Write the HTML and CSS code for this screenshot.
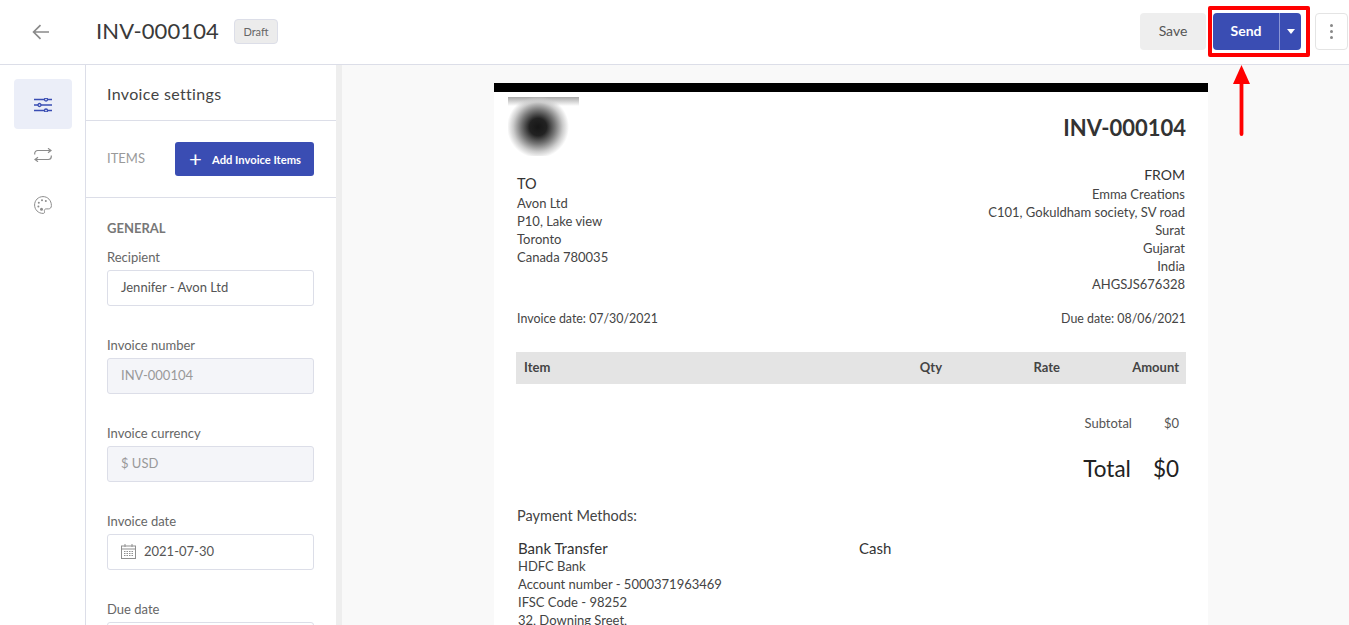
FILE: index.html
```html
<!DOCTYPE html>
<html lang="en">
<head>
  <meta charset="UTF-8">
  <title>INV-000104</title>
  <link rel="stylesheet" href="styles.css">
</head>
<body>
  <header class="topbar">
    <a class="back">
      <svg width="20" height="16" viewBox="0 0 20 16" fill="none" stroke="#8a8a8a" stroke-width="1.7"><path d="M18 8H3M9.5 1.2 2.600 8l6.900 6.800"/></svg>
    </a>
    <h1 class="inv-title">INV-000104</h1>
    <span class="badge">Draft</span>
    <div class="actions">
      <button class="btn-save">Save</button>
      <div class="send-group">
        <button class="btn-send">Send</button>
        <button class="btn-caret"><span class="caret"></span></button>
      </div>
      <button class="btn-more"><span></span><span></span><span></span></button>
    </div>
  </header>

  <div class="main">
    <nav class="rail">
      <a class="rail-item active">
        <svg width="18" height="14" viewBox="0 0 18 14" fill="none" stroke="#3a4db3" stroke-width="1.3"><path d="M0 1.500h18M0 7h18M0 12.500h18"/><circle cx="12" cy="1.500" r="1.500" fill="#ebeef8"/><circle cx="5.500" cy="7" r="1.500" fill="#ebeef8"/><circle cx="12" cy="12.500" r="1.500" fill="#ebeef8"/></svg>
      </a>
      <a class="rail-item">
        <svg width="18" height="14" viewBox="0 0 18 14" fill="none" stroke="#8c8c8c" stroke-width="1.200"><path d="M.7 6.500V5.500a3 3 0 0 1 3-3H17M14 .3l3 2.200-3 2.200M17.300 7.500v1a3 3 0 0 1-3 3H1M4 9.300l-3 2.200 3 2.200"/></svg>
      </a>
      <a class="rail-item">
        <svg width="18" height="18" viewBox="0 0 18 18" fill="none" stroke="#8c8c8c" stroke-width="1"><path d="M9 .6C4.300.6.600 4.300.6 9s3.700 8.400 8.400 8.400c1.300 0 1.900-.9 1.500-2-.5-1.300.2-2.500 1.700-2.500h2.200c1.800 0 3-1.200 3-3.300C17.400 4.300 13.700.6 9 .6Z"/><g fill="#8c8c8c" stroke="none"><circle cx="4.800" cy="6.800" r="1"/><circle cx="8" cy="4.200" r="1"/><circle cx="11.800" cy="4.900" r="1"/><circle cx="4.400" cy="10.500" r="1"/><circle cx="7.500" cy="13.300" r="1.500"/></g></svg>
      </a>
    </nav>

    <aside class="panel">
      <div class="panel-title">Invoice settings</div>
      <div class="items-row">
        <span class="section-label">ITEMS</span>
        <button class="btn-add"><span class="plus">+</span>Add Invoice Items</button>
      </div>
      <div class="general">
        <div class="section-label dark">GENERAL</div>
        <div class="field">
          <label>Recipient</label>
          <div class="input">Jennifer - Avon Ltd</div>
        </div>
        <div class="field">
          <label>Invoice number</label>
          <div class="input disabled">INV-000104</div>
        </div>
        <div class="field">
          <label>Invoice currency</label>
          <div class="input disabled">$ USD</div>
        </div>
        <div class="field">
          <label>Invoice date</label>
          <div class="input date">
            <svg width="15" height="15" viewBox="0 0 15 15" fill="none" stroke="#8f8f8f"><rect x=".5" y="2" width="14" height="12.500"/><path d="M.5 5h14M4 0v3M11 0v3"/><path d="M3 7.500h9M3 9.500h9M3 11.500h9" stroke-dasharray="1.500 1"/></svg>
            2021-07-30
          </div>
        </div>
        <div class="field">
          <label>Due date</label>
          <div class="input"></div>
        </div>
      </div>
    </aside>

    <section class="preview">
      <div class="paper">
        <div class="paper-head">
          <div class="logo"></div>
          <div class="paper-no">INV-000104</div>
        </div>
        <div class="parties">
          <div class="party to">
            <div class="party-title">TO</div>
            <div>Avon Ltd</div>
            <div>P10, Lake view</div>
            <div>Toronto</div>
            <div>Canada 780035</div>
          </div>
          <div class="party from">
            <div class="party-title">FROM</div>
            <div>Emma Creations</div>
            <div>C101, Gokuldham society, SV road</div>
            <div>Surat</div>
            <div>Gujarat</div>
            <div>India</div>
            <div>AHGSJS676328</div>
          </div>
        </div>
        <div class="dates">
          <span>Invoice date: 07/30/2021</span>
          <span>Due date: 08/06/2021</span>
        </div>
        <div class="table-head">
          <span class="col-item">Item</span>
          <span class="col-qty">Qty</span>
          <span class="col-rate">Rate</span>
          <span class="col-amount">Amount</span>
        </div>
        <div class="subtotal"><span>Subtotal</span><span>$0</span></div>
        <div class="total"><span>Total</span><span>$0</span></div>
        <div class="pay-title">Payment Methods:</div>
        <div class="pay-grid">
          <div class="pay-col">
            <div class="party-title">Bank Transfer</div>
            <div>HDFC Bank</div>
            <div>Account number - 5000371963469</div>
            <div>IFSC Code - 98252</div>
            <div>32, Downing Sreet,</div>
          </div>
          <div class="pay-col">
            <div class="party-title">Cash</div>
          </div>
        </div>
      </div>
    </section>
  </div>

  <div class="highlight"></div>
  <svg class="arrow" width="17" height="71" viewBox="0 0 17 71"><path d="M8.500 0 17 19H0Z" fill="#f00"/><path d="M6.600 18h3.800v51a1.900 1.900 0 0 1-3.800 0Z" fill="#f00"/></svg>
</body>
</html>
```

FILE: styles.css
```css
* {
  box-sizing: border-box;
}

html, body {
  margin: 0;
  height: 625px;
  overflow: hidden;
}

body {
  font-family: "Lato", "Noto Sans", sans-serif;
  color: #333;
  background: #fff;
  font-size: 13px;
}

button {
  font-family: inherit;
  border: none;
}

.topbar {
  display: flex;
  align-items: center;
  height: 65px;
  border-bottom: 1px solid #dcdee8;
  padding: 0 0 2px 31px;
}

.back {
  display: flex;
  width: 65px;
  margin-top: 1px;
}

.inv-title {
  margin: 0 0 2px;
  font-size: 22px;
  letter-spacing: .1px;
  font-weight: 400;
  color: #3a3a3a;
}

.badge {
  margin-left: 15px;
  padding: 0 8.500px;
  height: 25px;
  line-height: 23px;
  font-size: 11px;
  color: #666;
  background: #ececec;
  border: 1px solid #dcdee8;
  border-radius: 4px;
}

.actions {
  margin-left: auto;
  display: flex;
  align-items: center;
  height: 37px;
  padding-right: 1px;
}

.btn-save {
  width: 66px;
  height: 37px;
  margin-right: 7px;
  padding-bottom: 2px;
  background: #eee;
  color: #555;
  font-size: 14px;
  border-radius: 4px;
}

.send-group {
  display: flex;
  height: 37px;
  width: 88px;
  background: #3a4db3;
  border-radius: 4px;
}

.btn-send {
  flex: 1;
  padding-bottom: 2px;
  background: none;
  color: #fff;
  font-size: 14px;
  font-weight: 700;
}

.btn-caret {
  width: 22px;
  background: none;
  border-left: 1px solid #8a96d6;
  padding: 0;
  display: flex;
  align-items: center;
  justify-content: center;
}

.caret {
  border-left: 4px solid transparent;
  border-right: 4px solid transparent;
  border-top: 5px solid #fff;
}

.btn-more {
  margin-left: 14px;
  width: 33px;
  height: 37px;
  background: #fff;
  border: 1px solid #e4e4e4;
  border-radius: 4px;
  display: flex;
  flex-direction: column;
  align-items: center;
  justify-content: center;
  gap: 3px;
  padding: 0;
}

.btn-more span {
  width: 3px;
  height: 3px;
  border-radius: 50%;
  background: #888;
}

.main {
  display: flex;
  height: 560px;
  overflow: hidden;
}

.rail {
  width: 86px;
  border-right: 1px solid #dcdee8;
  padding: 14px 14px 0;
  display: flex;
  flex-direction: column;
  flex-shrink: 0;
}

.rail-item {
  width: 58px;
  height: 50px;
  padding-top: 2px;
  display: flex;
  align-items: center;
  justify-content: center;
  border-radius: 4px;
}

.rail-item.active {
  background: #ebeef8;
}

.panel {
  width: 250px;
  flex-shrink: 0;
  overflow: hidden;
  border-right: 6px solid #eee;
  box-sizing: content-box;
}

.panel-title {
  height: 56px;
  padding: 19px 21px 0;
  font-size: 16px;
  letter-spacing: .35px;
  color: #444;
  border-bottom: 1px solid #dcdee8;
}

.items-row {
  height: 77px;
  padding: 0 22px 0 21px;
  display: flex;
  align-items: center;
  justify-content: space-between;
  border-bottom: 1px solid #dcdee8;
}

.section-label {
  font-size: 13px;
  color: #9a9a9a;
  margin-bottom: 3px;
}

.section-label.dark {
  color: #777;
  font-weight: 700;
  margin-bottom: 0;
}

.btn-add {
  width: 139px;
  height: 34px;
  background: #3a4db3;
  color: #fff;
  font-size: 11.200px;
  font-weight: 700;
  border-radius: 3px;
  display: flex;
  align-items: center;
  padding: 0 0 0 14px;
}

.plus {
  width: 23px;
  font-size: 22px;
  font-weight: 400;
  line-height: 1;
  text-align: left;
}

.general {
  padding: 22px 22px 0 21px;
}

.field {
  margin-top: 13px;
  margin-bottom: 31px;
}

.field label {
  display: block;
  font-size: 13px;
  color: #666;
  margin-bottom: 4px;
  line-height: 17px;
}

.input {
  height: 36px;
  border: 1px solid #dcdee8;
  border-radius: 3px;
  padding: 0 13px 2px;
  display: flex;
  align-items: center;
  gap: 8px;
  font-size: 13px;
  color: #555;
  background: #fff;
}

.input.disabled {
  background: #f4f5f9;
  color: #999;
}

.preview {
  flex: 1;
  background: #f9f9f9;
  padding: 18px 141px 0 152px;
  overflow: hidden;
}

.paper {
  background: #fff;
  border-top: 9px solid #000;
  height: 542px;
  overflow: hidden;
  padding: 5px 22px 0;
  color: #444;
  font-size: 13px;
  line-height: 18px;
}

.paper-head {
  display: flex;
  justify-content: space-between;
  margin-left: -8px;
}

.logo {
  width: 71px;
  height: 59px;
  background:
    radial-gradient(circle 31px at 30px 30px, #161616 0, #222 28%, #777 55%, #ccc 80%, rgba(255,255,255,0) 100%),
    linear-gradient(#a8a8a8, #fff 9px);
}

.paper-no {
  font-size: 22px;
  font-weight: 700;
  line-height: 26px;
  margin-top: 18px;
  color: #333;
}

.parties {
  display: flex;
  justify-content: space-between;
  align-items: flex-start;
  margin-top: 9px;
}

.party.to {
  margin-left: 1px;
  margin-top: 9px;
}

.party.from {
  text-align: right;
  margin-right: 1px;
}

.party-title {
  font-size: 14.500px;
  line-height: 20px;
  color: #333;
}

.from .party-title {
  font-size: 14px;
  line-height: 19px;
  margin-bottom: 1px;
}

.dates {
  display: flex;
  justify-content: space-between;
  margin: 17px 0 0 1px;
  font-size: 12.400px;
}

.table-head {
  display: grid;
  grid-template-columns: 1fr 60px 118px 119px;
  align-items: center;
  height: 32px;
  margin-top: 24px;
  padding: 0 7px 2px 8px;
  background: #e4e4e4;
  font-weight: 700;
  color: #444;
}

.col-qty, .col-rate {
  text-align: right;
}

.col-amount {
  text-align: right;
}

.subtotal {
  display: flex;
  justify-content: flex-end;
  gap: 32px;
  margin-top: 30px;
  padding-right: 7px;
  color: #555;
}

.total {
  display: flex;
  justify-content: flex-end;
  gap: 22px;
  margin-top: 23px;
  padding-right: 7px;
  font-size: 22.500px;
  line-height: 28px;
  color: #222;
}

.pay-title {
  margin: 23px 0 0 1px;
  font-size: 14.500px;
  line-height: 20px;
}

.pay-grid {
  display: grid;
  grid-template-columns: 341px 1fr;
  margin: 13px 0 0 2px;
}

.pay-col .party-title {
  font-size: 15px;
  line-height: 18px;
}

.highlight {
  position: absolute;
  left: 1208px;
  top: 6px;
  width: 102px;
  height: 51px;
  border: 4px solid #f00;
  border-radius: 2px;
}

.arrow {
  position: absolute;
  left: 1233px;
  top: 65px;
}
```
